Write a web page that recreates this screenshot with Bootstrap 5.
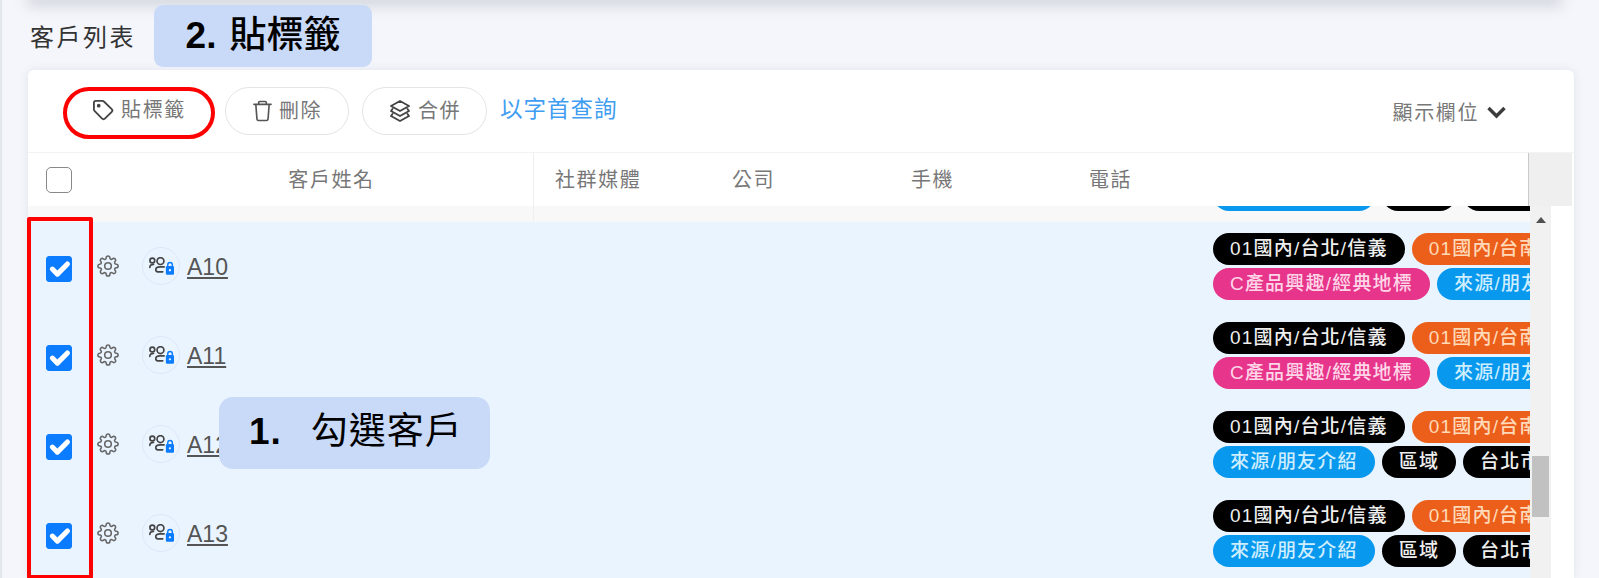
<!DOCTYPE html>
<html lang="zh-Hant">
  <head>
    <meta charset="utf-8" />
    <meta name="viewport" content="width=device-width, initial-scale=1" />
    <title>客戶列表</title>
    <link href="https://cdn.jsdelivr.net/npm/bootstrap@5.3.0/dist/css/bootstrap.min.css" rel="stylesheet" />
    <style>
      html, body { height: 578px; overflow: hidden; }
      body {
        background: #f4f6fb;
        font-family: "Liberation Sans", "Noto Sans CJK TC", sans-serif;
        border-left: 2px solid #e3e7ee;
      }
      .page-wrap { position: relative; height: 578px; overflow: hidden; }
      .top-edge { height: 4px; margin: -4px 42px 3px 30px; background: #d8d9dd; box-shadow: 0 1px 14px 5px rgba(130, 135, 150, .3); }
      .title-row { height: 67px; padding-left: 28px; }
      .title-text { font-size: 24px; letter-spacing: 2.5px; color: #333; width: 124px; padding-top: 2px; }
      .note-box { background: #c9daf8; color: #000; border-radius: 9px; }
      .note-two { width: 218px; height: 62px; margin-top: 2px; font-size: 37px; }
      .note-two b { font-weight: 700; margin-right: 13px; }
      .note-two span { font-weight: 500; }
      .note-one {
        position: absolute; left: 217px; top: 397px; width: 271px; height: 72px; font-size: 37px;
        border-radius: 14px; padding: 0 0 3px 30px; letter-spacing: 1px;
      }
      .note-one b { margin-right: 29px; }
      .list-card { width: 1546px; margin-left: 26px; background: #fff; border-radius: 6px 6px 0 0; box-shadow: 0 0 10px rgba(60, 70, 100, .1); }
      .tool-row { height: 83px; padding: 17px 68px 0 39px; border-bottom: 1px solid #f3f3f3; }
      .pill-btn {
        height: 48px; border: 1px solid #e4e4e4; border-radius: 24px; background: #fff; color: #777;
        font-size: 20px; letter-spacing: 1.6px; padding: 0; display: flex; align-items: center; justify-content: center; gap: 6px;
      }
      .pill-tag { width: 148px; margin: 2px 12px 0 -2px; padding-bottom: 6px; border: 0; outline: 4.5px solid #fe0000; outline-offset: -2px; border-radius: 26px; }
      .pill-del { width: 124px; margin-right: 13px; }
      .pill-merge { width: 125px; margin-right: 13px; }
      .alpha-link { font-size: 22.5px; color: #3f9df2; text-decoration: none; letter-spacing: 1px; margin-top: -20px; }
      .col-toggle { color: #777; font-size: 20px; letter-spacing: 1.6px; gap: 8px; margin-top: -14px; }
      .head-row { height: 53px; color: #777; font-size: 20px; letter-spacing: 1.6px; }
      .head-check { width: 506px; border-right: 1px solid #efefef; padding-left: 18px; }
      .head-name { width: 100%; text-align: center; padding-left: 58px; }
      .head-cols { flex: 1; }
      .head-cols span { display: inline-block; }
      .head-corner { width: 44px; margin-right: 2px; background: #efefef; border-left: 1px solid #c9c9c9; }
      .body-wrap { height: 373px; }
      .rows-area { width: 1502px; overflow: hidden; }
      .cut-row { height: 16px; background: #f8f8f8; overflow: hidden; }
      .cut-left { width: 506px; border-right: 1px solid #efefef; }
      .cust-row { height: 89px; background: #eaf4ff; }
      .check-box { width: 26px; height: 26px; margin: 0; border: 1px solid #888; border-radius: 4px; flex: none; }
      .check-box:checked { background-color: #0b7cff; border-color: #0b7cff; background-size: 140%; border-radius: 3px; }
      .cust-row .check-box { margin: 4px 25px 0 18px; }
      .cust-row .gear-icon { margin-right: 23px; margin-top: -2px; }
      .avatar-ring { width: 38px; height: 38px; border-radius: 50%; border: 1px solid #dbe8f8; margin-right: 7px; margin-top: -2px; }
      .cust-name { font-size: 23px; color: #555; text-decoration: underline; margin-top: 2px; }
      .tag-cell { width: 317px; margin-left: auto; padding-top: 10.5px; align-self: flex-start; overflow: hidden; }
      .tag-line { display: flex; gap: 7px; white-space: nowrap; margin-bottom: 3.5px; }
      .tag-pill { height: 32px; line-height: 32px; padding: 0 17px; border-radius: 16px; font-size: 19px; font-weight: 500; letter-spacing: 1.2px; flex: none; color: #eee; }
      .tag-black { background: #000; }
      .tag-orange { background: #ec5f1b; color: #ffd9b8; }
      .tag-pink { background: #e6358a; color: #ffd5e8; }
      .tag-blue { background: #0898ee; color: #cfeeff; }
      .cut-tags { margin-left: auto; width: 317px; overflow: hidden; height: 5px; }
      .cut-tags .tag-pill { margin-top: -27px; }
      .bar-col { width: 21px; background: #f1f1f1; position: relative; }
      .bar-up { width: 0; height: 0; border: 5px solid transparent; border-top: 0; border-bottom: 6px solid #505050; margin: 11px auto 0; }
      .bar-thumb { position: absolute; left: 2px; top: 250px; width: 17px; height: 61px; background: #c1c1c1; }
      .red-frame { position: absolute; left: 25px; top: 217px; width: 66px; height: 362px; border: 4.5px solid #fe0000; border-radius: 2px; pointer-events: none; }
    </style>
  </head>
  <body>
    <svg width="0" height="0" class="d-none">
      <symbol id="i-gear" viewBox="0 0 24 24"><circle cx="12" cy="12" r="3.6" /><path d="M19.4 15a1.65 1.65 0 0 0 .33 1.82l.06.06a2 2 0 0 1 0 2.83 2 2 0 0 1-2.83 0l-.06-.06a1.65 1.65 0 0 0-1.82-.33 1.65 1.65 0 0 0-1 1.51V21a2 2 0 0 1-2 2 2 2 0 0 1-2-2v-.09A1.65 1.65 0 0 0 9 19.4a1.65 1.65 0 0 0-1.82.33l-.06.06a2 2 0 0 1-2.83 0 2 2 0 0 1 0-2.83l.06-.06a1.65 1.65 0 0 0 .33-1.82 1.65 1.65 0 0 0-1.51-1H3a2 2 0 0 1-2-2 2 2 0 0 1 2-2h.09A1.65 1.65 0 0 0 4.6 9a1.65 1.65 0 0 0-.33-1.82l-.06-.06a2 2 0 0 1 0-2.83 2 2 0 0 1 2.83 0l.06.06a1.65 1.65 0 0 0 1.82.33H9a1.65 1.65 0 0 0 1-1.51V3a2 2 0 0 1 2-2 2 2 0 0 1 2 2v.09a1.65 1.65 0 0 0 1 1.51 1.65 1.65 0 0 0 1.82-.33l.06-.06a2 2 0 0 1 2.83 0 2 2 0 0 1 0 2.83l-.06.06a1.65 1.65 0 0 0-.33 1.82V9a1.65 1.65 0 0 0 1.51 1H21a2 2 0 0 1 2 2 2 2 0 0 1-2 2h-.09a1.65 1.65 0 0 0-1.51 1z" /></symbol>
      <symbol id="i-people" viewBox="0 0 24 17">
        <circle cx="3.200" cy="3.200" r="2.300" fill="none" stroke="#444" stroke-width="1.6" />
        <circle cx="11" cy="3.800" r="3.300" fill="none" stroke="#444" stroke-width="1.6" />
        <path d="M.8 9.800c0-1.800 1.200-2.900 3.600-2.900M14.500 9.400h-4c-2.500 0-4 1.100-4 2.800 0 1.200.8 1.900 2 1.900h4.700" fill="none" stroke="#444" stroke-width="1.6" stroke-linecap="round" />
        <path d="M18 9V7.400a2.200 2.200 0 0 1 4.400 0V9" fill="none" stroke="#0b7cff" stroke-width="1.4" />
        <rect x="16.200" y="8.600" width="7.800" height="8.200" rx="1.200" fill="#0b7cff" />
        <circle cx="20.100" cy="12.600" r="1.100" fill="#eaf4ff" />
      </symbol>
    </svg>

    <div class="page-wrap">
      <div class="top-edge"></div>
      <div class="title-row d-flex">
        <div class="title-text d-flex align-items-center">客戶列表</div>
        <div class="note-box note-two d-flex align-items-center justify-content-center"><b>2.</b><span>貼標籤</span></div>
      </div>

      <div class="list-card">
        <div class="tool-row d-flex align-items-start">
          <button type="button" class="pill-btn pill-tag">
            <svg width="23" height="23" viewBox="0 0 24 24" fill="none" stroke="#444" stroke-width="1.9" stroke-linejoin="round"><path d="M20.590 13.410l-7.170 7.170a2 2 0 0 1-2.830 0L2.600 12.400A2 2 0 0 1 2 11V4a2 2 0 0 1 2-2h7a2 2 0 0 1 1.400.6l8.200 8a2 2 0 0 1 0 2.810z" /><circle cx="7" cy="7" r="1" fill="#444" /></svg>
            貼標籤
          </button>
          <button type="button" class="pill-btn pill-del">
            <svg width="21" height="24" viewBox="0 0 22 24" fill="none" stroke="#555" stroke-width="1.7" stroke-linecap="round" stroke-linejoin="round"><path d="M2 5h18M7 5V3a1 1 0 0 1 1-1h6a1 1 0 0 1 1 1v2M4 5l1.200 15.500A1.700 1.700 0 0 0 7 22h8a1.700 1.700 0 0 0 1.800-1.500L18 5" /></svg>
            刪除
          </button>
          <button type="button" class="pill-btn pill-merge">
            <svg width="24" height="24" viewBox="0 0 24 24" fill="none" stroke="#444" stroke-width="1.9" stroke-linejoin="round" stroke-linecap="round"><path d="M12 2l9 5-9 5-9-5zM4.500 10l-1.500 2 9 5 9-5-1.500-2M4.500 15l-1.500 2 9 5 9-5-1.500-2" /></svg>
            合併
          </button>
          <a href="#" class="alpha-link align-self-center">以字首查詢</a>
          <div class="col-toggle d-flex align-items-center align-self-center ms-auto">
            <span>顯示欄位</span>
            <svg width="19" height="13" viewBox="0 0 19 13" fill="none" stroke="#3c3c3c" stroke-width="3.400"><path d="M1.500 2l8 8 8-8" /></svg>
          </div>
        </div>

        <div class="head-row d-flex">
          <div class="head-check d-flex align-items-center">
            <input class="form-check-input check-box" type="checkbox" aria-label="全選" />
            <div class="head-name">客戶姓名</div>
          </div>
          <div class="head-cols d-flex align-items-center">
            <span style="width: 198px; padding-left: 21px">社群媒體</span>
            <span style="width: 179px">公司</span>
            <span style="width: 178px">手機</span>
            <span>電話</span>
          </div>
          <div class="head-corner"></div>
        </div>

        <div class="body-wrap d-flex">
          <div class="rows-area">
            <div class="cut-row d-flex">
              <div class="cut-left"></div>
              <div class="cut-tags">
                <div class="tag-line">
                  <span class="tag-pill tag-blue">來源/朋友介紹</span>
                  <span class="tag-pill tag-black">區域</span>
                  <span class="tag-pill tag-black">台北市</span>
                </div>
              </div>
            </div>

            <div class="cust-row d-flex align-items-center">
              <input class="form-check-input check-box" type="checkbox" checked aria-label="A10" />
              <svg class="gear-icon" width="22" height="22" fill="none" stroke="#666" stroke-width="1.700"><use href="#i-gear" /></svg>
              <div class="avatar-ring d-flex align-items-center justify-content-center"><svg width="25" height="18"><use href="#i-people" /></svg></div>
              <a href="#" class="cust-name">A10</a>
              <div class="tag-cell">
                <div class="tag-line"><span class="tag-pill tag-black">01國內/台北/信義</span><span class="tag-pill tag-orange">01國內/台南/中西</span></div>
                <div class="tag-line"><span class="tag-pill tag-pink">C產品興趣/經典地標</span><span class="tag-pill tag-blue">來源/朋友介紹</span></div>
              </div>
            </div>

            <div class="cust-row d-flex align-items-center">
              <input class="form-check-input check-box" type="checkbox" checked aria-label="A11" />
              <svg class="gear-icon" width="22" height="22" fill="none" stroke="#666" stroke-width="1.700"><use href="#i-gear" /></svg>
              <div class="avatar-ring d-flex align-items-center justify-content-center"><svg width="25" height="18"><use href="#i-people" /></svg></div>
              <a href="#" class="cust-name">A11</a>
              <div class="tag-cell">
                <div class="tag-line"><span class="tag-pill tag-black">01國內/台北/信義</span><span class="tag-pill tag-orange">01國內/台南/中西</span></div>
                <div class="tag-line"><span class="tag-pill tag-pink">C產品興趣/經典地標</span><span class="tag-pill tag-blue">來源/朋友介紹</span></div>
              </div>
            </div>

            <div class="cust-row d-flex align-items-center">
              <input class="form-check-input check-box" type="checkbox" checked aria-label="A12" />
              <svg class="gear-icon" width="22" height="22" fill="none" stroke="#666" stroke-width="1.700"><use href="#i-gear" /></svg>
              <div class="avatar-ring d-flex align-items-center justify-content-center"><svg width="25" height="18"><use href="#i-people" /></svg></div>
              <a href="#" class="cust-name">A12</a>
              <div class="tag-cell">
                <div class="tag-line"><span class="tag-pill tag-black">01國內/台北/信義</span><span class="tag-pill tag-orange">01國內/台南/中西</span></div>
                <div class="tag-line"><span class="tag-pill tag-blue">來源/朋友介紹</span><span class="tag-pill tag-black">區域</span><span class="tag-pill tag-black">台北市</span></div>
              </div>
            </div>

            <div class="cust-row d-flex align-items-center">
              <input class="form-check-input check-box" type="checkbox" checked aria-label="A13" />
              <svg class="gear-icon" width="22" height="22" fill="none" stroke="#666" stroke-width="1.700"><use href="#i-gear" /></svg>
              <div class="avatar-ring d-flex align-items-center justify-content-center"><svg width="25" height="18"><use href="#i-people" /></svg></div>
              <a href="#" class="cust-name">A13</a>
              <div class="tag-cell">
                <div class="tag-line"><span class="tag-pill tag-black">01國內/台北/信義</span><span class="tag-pill tag-orange">01國內/台南/中西</span></div>
                <div class="tag-line"><span class="tag-pill tag-blue">來源/朋友介紹</span><span class="tag-pill tag-black">區域</span><span class="tag-pill tag-black">台北市</span></div>
              </div>
            </div>
          </div>
          <div class="bar-col">
            <div class="bar-up"></div>
            <div class="bar-thumb"></div>
          </div>
        </div>
      </div>

      <div class="note-box note-one d-flex align-items-center"><b>1.</b><span>勾選客戶</span></div>
      <div class="red-frame"></div>
    </div>

    <script src="https://cdn.jsdelivr.net/npm/bootstrap@5.3.0/dist/js/bootstrap.bundle.min.js"></script>
  </body>
</html>
